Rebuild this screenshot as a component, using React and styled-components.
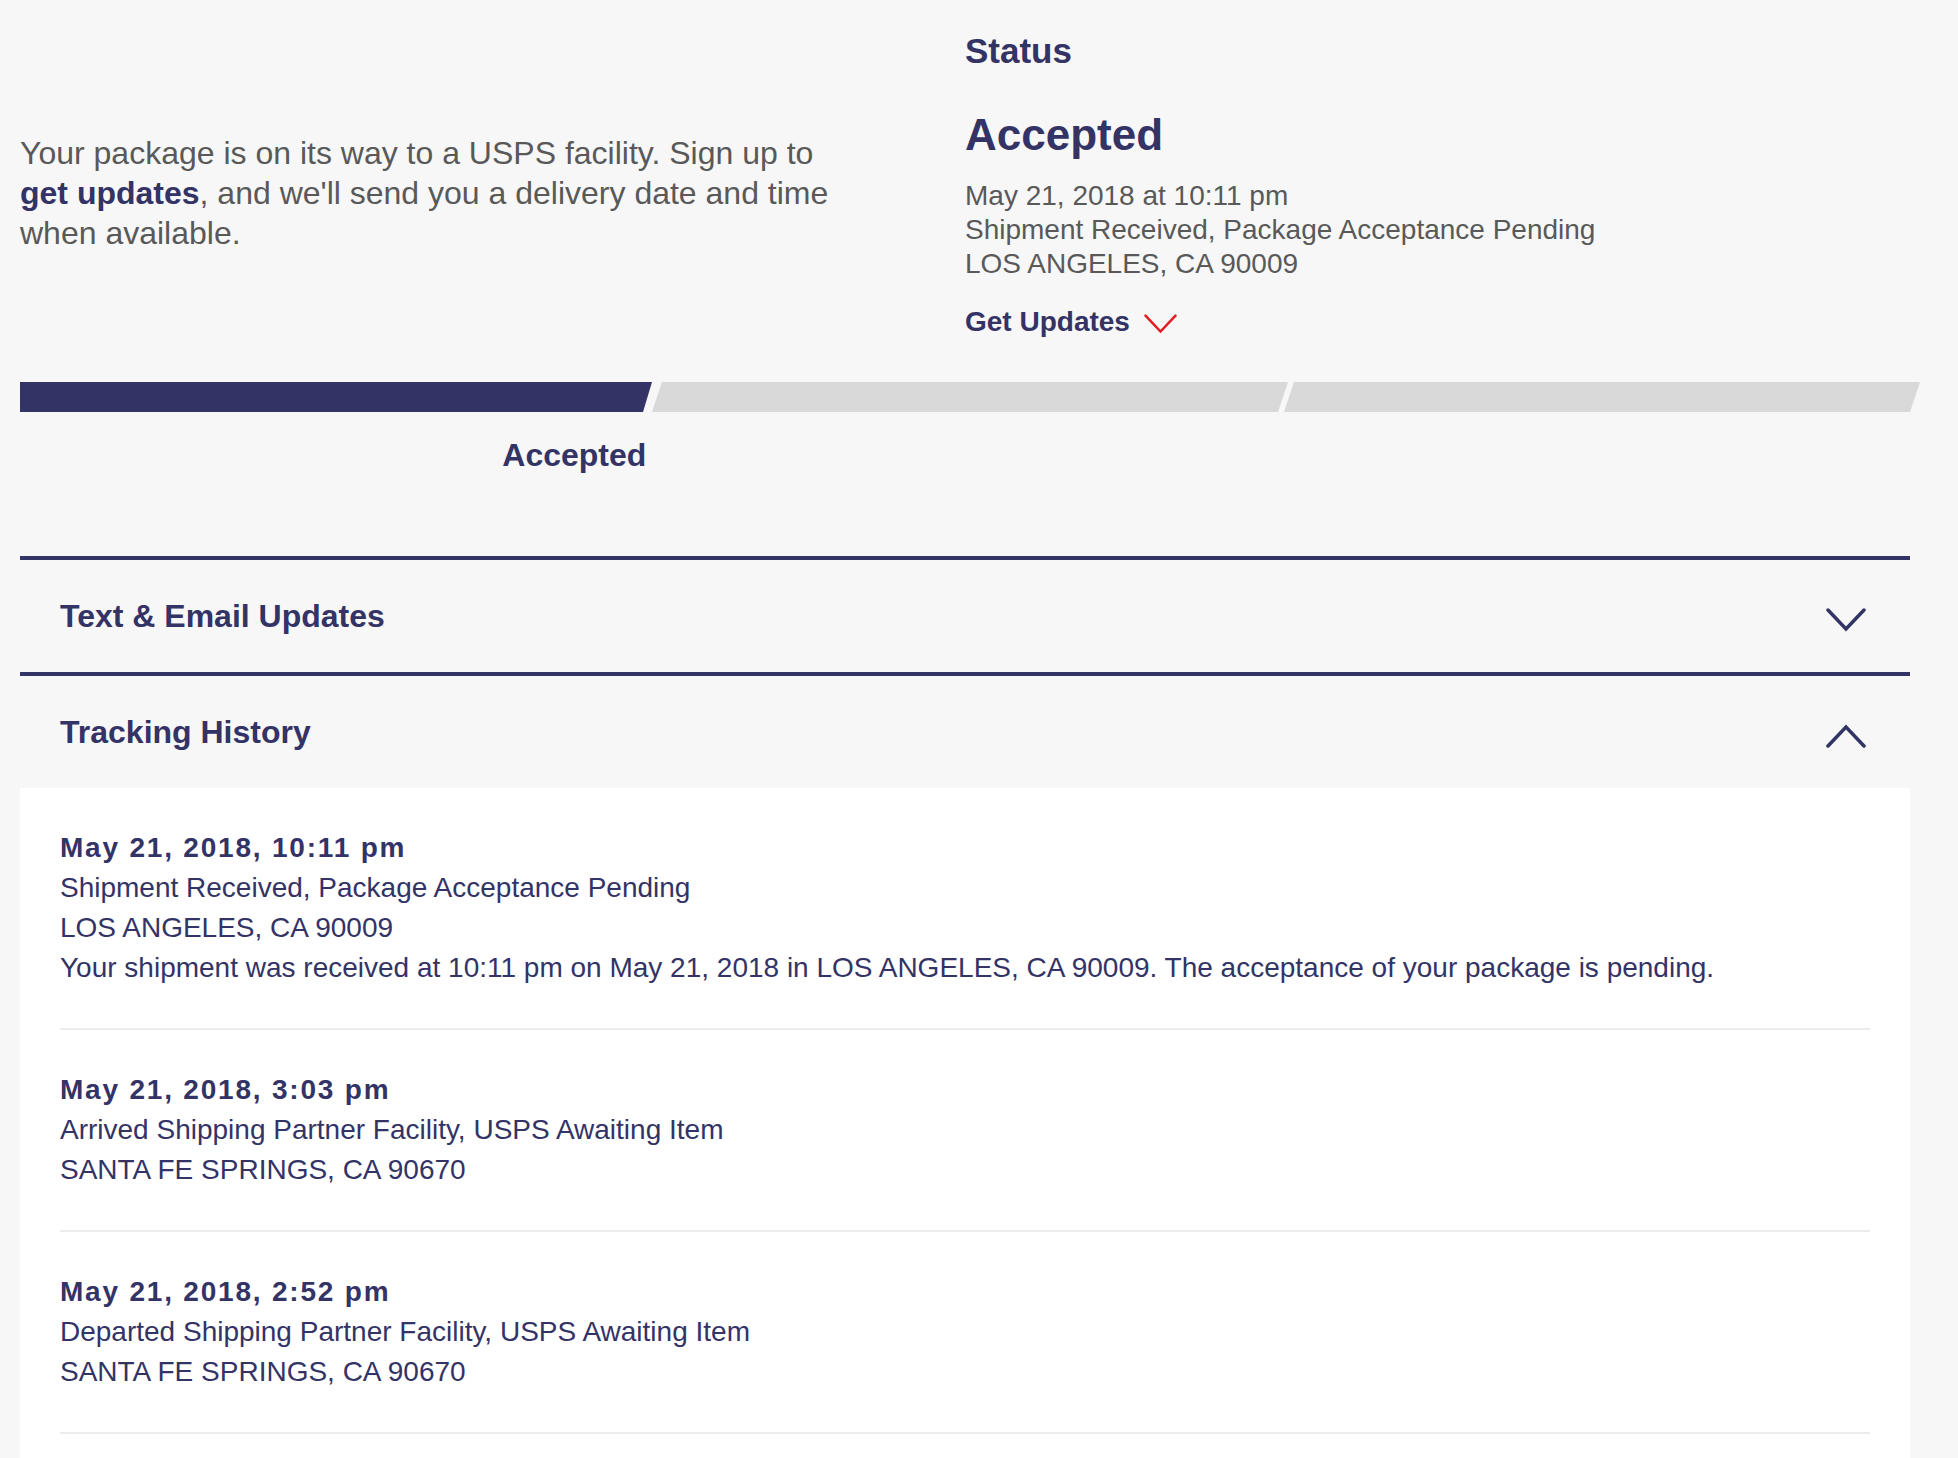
import React from 'react'
import styled, { createGlobalStyle } from 'styled-components'

const colors = {
	navy: '#333366',
	grey: '#595959',
	bg: '#f7f7f7',
	track: '#d9d9d9',
	divider: '#ececec',
	red: '#e71921',
}

const GlobalStyle = createGlobalStyle`
	html, body {
		margin: 0;
		background: ${colors.bg};
		font-family: 'Liberation Sans', Arial, sans-serif;
	}
`

const history = [
	{
		date: 'May 21, 2018, 10:11 pm',
		lines: [
			'Shipment Received, Package Acceptance Pending',
			'LOS ANGELES, CA 90009',
			'Your shipment was received at 10:11 pm on May 21, 2018 in LOS ANGELES, CA 90009. The acceptance of your package is pending.',
		],
	},
	{
		date: 'May 21, 2018, 3:03 pm',
		lines: ['Arrived Shipping Partner Facility, USPS Awaiting Item', 'SANTA FE SPRINGS, CA 90670'],
	},
	{
		date: 'May 21, 2018, 2:52 pm',
		lines: ['Departed Shipping Partner Facility, USPS Awaiting Item', 'SANTA FE SPRINGS, CA 90670'],
	},
]

const steps = [{ label: 'Accepted', active: true }, { label: '' }, { label: '' }]

const Chevron = ({ up, color = colors.navy, width = 40, height = 24, stroke = 3.5 }) => (
	<svg width={width} height={height} viewBox='0 0 40 24' fill='none'>
		<path
			d={up ? 'M2 22 L20 3 L38 22' : 'M2 2 L20 21 L38 2'}
			stroke={color}
			strokeWidth={stroke}
			strokeLinecap='round'
			strokeLinejoin='miter'
		/>
	</svg>
)

const App = () => {
	return (
		<>
			<GlobalStyle />
			<StyledPage>
				<StyledSummary>
					<StyledIntro>
						Your package is on its way to a USPS facility. Sign up to <strong>get updates</strong>, and
						we'll send you a delivery date and time when available.
					</StyledIntro>

					<div>
						<StyledStatusLabel>Status</StyledStatusLabel>
						<StyledStatusTitle>Accepted</StyledStatusTitle>
						<StyledStatusDetail>
							May 21, 2018 at 10:11 pm
							<br />
							Shipment Received, Package Acceptance Pending
							<br />
							LOS ANGELES, CA 90009
						</StyledStatusDetail>
						<StyledGetUpdates type='button'>
							Get Updates
							<Chevron color={colors.red} width={35} height={20} stroke={3} />
						</StyledGetUpdates>
					</div>
				</StyledSummary>

				<StyledProgress>
					{steps.map((step, i) => (
						<StyledSegment key={i} $active={step.active} $first={i === 0} />
					))}
				</StyledProgress>
				<StyledStepLabels>
					{steps.map((step, i) => (
						<span key={i}>{step.label}</span>
					))}
				</StyledStepLabels>

				<StyledAccordionHeader $first>
					<h3>Text &amp; Email Updates</h3>
					<Chevron />
				</StyledAccordionHeader>
				<StyledAccordionHeader>
					<h3>Tracking History</h3>
					<Chevron up />
				</StyledAccordionHeader>

				<StyledHistory>
					{history.map((item) => (
						<StyledEntry key={item.date}>
							<strong>{item.date}</strong>
							{item.lines.map((line) => (
								<p key={line}>{line}</p>
							))}
						</StyledEntry>
					))}
				</StyledHistory>
			</StyledPage>
		</>
	)
}

const StyledPage = styled.div`
	padding: 0 48px 0 20px;
`

const StyledSummary = styled.section`
	display: grid;
	grid-template-columns: 1fr 1fr;
`

const StyledIntro = styled.p`
	margin: 0;
	padding-top: 133px;
	max-width: 830px;
	font-size: 32px;
	line-height: 40px;
	color: ${colors.grey};

	strong {
		color: ${colors.navy};
		font-weight: 700;
	}
`

const StyledStatusLabel = styled.h3`
	margin: 30px 0 0;
	font-size: 35px;
	line-height: 42px;
	font-weight: 700;
	color: ${colors.navy};
`

const StyledStatusTitle = styled.h2`
	margin: 37px 0 0;
	font-size: 44px;
	line-height: 52px;
	font-weight: 700;
	color: ${colors.navy};
`

const StyledStatusDetail = styled.p`
	margin: 18px 0 0;
	font-size: 28px;
	line-height: 34px;
	color: ${colors.grey};
`

const StyledGetUpdates = styled.button`
	display: inline-flex;
	align-items: center;
	gap: 13px;
	margin-top: 24px;
	padding: 0;
	border: none;
	background: none;
	font-family: inherit;
	font-size: 28px;
	line-height: 34px;
	font-weight: 700;
	color: ${colors.navy};
	cursor: pointer;

	svg {
		margin-top: 4px;
	}
`

const StyledProgress = styled.div`
	display: flex;
	height: 30px;
	margin: 43px -10px 0 0;
`

const StyledSegment = styled.div`
	flex: 1;
	margin-left: ${({ $first }) => ($first ? '0' : '-4px')};
	background: ${({ $active }) => ($active ? colors.navy : colors.track)};
	clip-path: ${({ $first }) =>
		$first
			? 'polygon(0 0, calc(100% - 4px) 0, calc(100% - 13px) 100%, 0 100%)'
			: 'polygon(10px 0, 100% 0, calc(100% - 10px) 100%, 0 100%)'};
`

const StyledStepLabels = styled.div`
	display: grid;
	grid-template-columns: repeat(3, 1fr);
	margin: 24px -10px 0 0;

	span {
		padding-right: 7px;
		text-align: right;
		font-size: 32px;
		line-height: 38px;
		font-weight: 700;
		color: ${colors.navy};
	}
`

const StyledAccordionHeader = styled.div`
	display: flex;
	align-items: center;
	justify-content: space-between;
	height: 112px;
	margin-top: ${({ $first }) => ($first ? '82px' : '0')};
	padding: 0 44px 0 40px;
	border-top: 4px solid ${colors.navy};

	h3 {
		margin: 0;
		font-size: 32px;
		font-weight: 700;
		color: ${colors.navy};
	}

	svg {
		margin-top: 8px;
	}
`

const StyledHistory = styled.div`
	padding: 0 40px 80px;
	background: #fff;
`

const StyledEntry = styled.div`
	padding: 40px 0;
	border-bottom: 2px solid ${colors.divider};
	color: ${colors.navy};
	font-size: 28px;
	line-height: 40px;

	strong {
		display: block;
		font-weight: 700;
		letter-spacing: 1.8px;
	}

	p {
		margin: 0;
	}
`

export default App
